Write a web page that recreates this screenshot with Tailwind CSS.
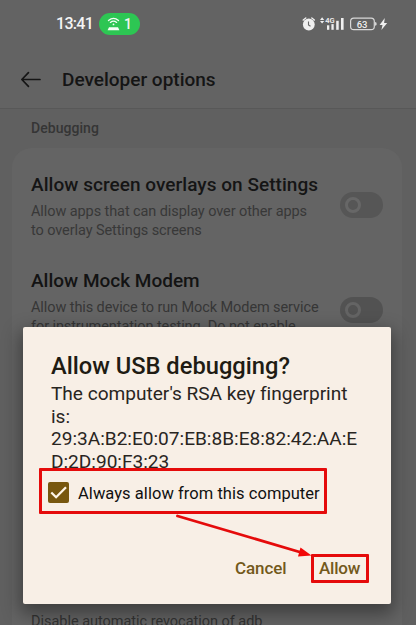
<!DOCTYPE html>
<html lang="en">
<head>
<meta charset="utf-8">
<title>Developer options</title>
<script src="https://cdn.jsdelivr.net/npm/@tailwindcss/browser@4"></script>
</head>
<body class="h-[625px] w-[416px] overflow-hidden bg-[#606060] font-['Roboto',sans-serif]">
<div class="relative flex h-[625px] w-[416px] flex-col overflow-hidden whitespace-nowrap">
  <!-- status bar -->
  <header class="flex h-[47px] shrink-0 items-center bg-[#636363] pr-[28px] pl-[56px] text-[#f4f4f4]">
    <span class="w-[43px] text-[16px] leading-5 font-medium tracking-[-0.7px]">13:41</span>
    <div class="flex h-[22px] w-[41px] items-center rounded-full bg-[#2dc653] pl-[8px]">
      <svg class="h-[14px] w-[13px]" viewBox="0 0 13 14" fill="none" stroke="#f4fff6" stroke-width="1.3" stroke-linecap="round"><path d="M1.5 3.6Q6.5-.9 11.5 3.6M3.4 5.4Q6.5 2.8 9.6 5.4"/><circle cx="6.5" cy="7.4" r=".9" fill="#f4fff6" stroke="none"/><path d="M.6 13.3L2 10.3H11L12.4 13.3Z" fill="#f4fff6" stroke="none"/></svg>
      <span class="ml-[4px] text-[14px] leading-4 font-medium">1</span>
    </div>
    <svg class="ml-auto h-[16px] w-[88px]" viewBox="300 15.7 88 16" fill="#efefef">
      <circle cx="308.8" cy="24.2" r="5.9"/><path d="M303.2 19.7l2.6-2M314.4 19.7l-2.6-2" stroke="#efefef" stroke-width="1.4" stroke-linecap="round"/><path d="M308.5 21.3v3.3l2 1.3" fill="none" stroke="#666" stroke-width="1.1"/>
      <path d="M320 19.6l2.1-2.6 2.1 2.6zM320 20.8h4.2l-2.1 2.4z"/>
      <text x="325.2" y="23" font-size="8" font-weight="600" textLength="9.4" lengthAdjust="spacingAndGlyphs">4G</text>
      <rect x="327" y="25" width="2.3" height="4.5"/><rect x="331.4" y="23.8" width="2.3" height="5.7"/><rect x="336.2" y="20.5" width="2.5" height="9"/><rect x="341" y="17.7" width="2.6" height="11.8"/>
      <rect x="350.6" y="17.8" width="23.7" height="11.6" rx="3.2" fill="none" stroke="#d8d8d8" stroke-width="1.2"/><path d="M375.2 21.8q1.4 0 1.4 1.8t-1.4 1.8z"/>
      <text x="356.7" y="27.3" font-size="9.8" font-weight="500" textLength="10.8" lengthAdjust="spacingAndGlyphs">63</text>
      <path d="M384.8 17.8L379.6 24.6H382.5L381.4 29.8L387.2 22.7H384.1Z"/>
    </svg>
  </header>
  <!-- app bar -->
  <div class="flex h-[62px] shrink-0 items-center border-b border-[#585858] bg-[#636363] pt-[3px] pl-[20px] text-[#151515]">
    <svg class="h-[17px] w-[22px]" viewBox="0 0 22 18" fill="none" stroke="#151515" stroke-width="1.8" stroke-linecap="round" stroke-linejoin="round"><path d="M20.5 9H1.5M8.3 1.8L1.3 9L8.3 16.2"/></svg>
    <h1 class="mt-px ml-[20px] text-[19px] leading-6 font-medium">Developer options</h1>
  </div>
  <main class="flex grow flex-col pr-[14px] pl-[12px]">
    <h2 class="mt-[10px] ml-[19px] text-[14px] leading-[18px] font-medium tracking-[0.05px] text-[#353535]">Debugging</h2>
    <section class="mt-[11px] h-[520px] shrink-0 rounded-t-[20px] bg-[#646464] px-[19px] pt-[25px]">
      <div class="flex h-[96px] items-start justify-between">
        <div>
          <h3 class="text-[19px] leading-6 font-medium tracking-[0.04px] text-[#151515]">Allow screen overlays on Settings</h3>
          <p class="mt-[5px] text-[14.5px] leading-[19px] tracking-[-0.09px] text-[#383838]">Allow apps that can display over other apps<br>to overlay Settings screens</p>
        </div>
        <div class="mt-[19px] flex h-[26px] w-[43px] shrink-0 items-center rounded-full bg-[#565656] pl-[5px]"><i class="size-[16px] rounded-full border-[3px] border-[#676767]"></i></div>
      </div>
      <div class="flex h-[96px] items-start justify-between">
        <div>
          <h3 class="text-[19px] leading-6 font-medium text-[#131313]">Allow Mock Modem</h3>
          <p class="mt-[5px] text-[14.5px] leading-[19px] tracking-[-0.09px] text-[#363636]">Allow this device to run Mock Modem service<br>for instrumentation testing. Do not enable</p>
        </div>
        <div class="mt-[28px] flex h-[26px] w-[43px] shrink-0 items-center rounded-full bg-[#525252] pl-[5px]"><i class="size-[16px] rounded-full border-[3px] border-[#646464]"></i></div>
      </div>
      <p class="mt-[247px] text-[14.5px] leading-[19px] tracking-[-0.03px] text-[#333]">Disable automatic revocation of adb</p>
    </section>
  </main>

  <!-- dialog -->
  <div role="dialog" class="absolute top-[327px] left-[23px] flex h-[277px] w-[368px] flex-col rounded-[2px] bg-[#f8efe6] shadow-[0_7px_18px_3px_rgba(0,0,0,0.38)]">
    <h2 class="mt-[24px] ml-[28px] text-[23.7px] leading-[30px] font-medium text-[#201b13]">Allow USB debugging?</h2>
    <p class="mt-[2px] ml-[28px] text-[19.1px] leading-[22.6px] tracking-[-0.02px] text-[#29251f]">The computer's RSA key fingerprint<br>is:<br>29:3A:B2:E0:07:EB:8B:E8:82:42:AA:E<br>D:2D:90:F3:23</p>
    <label class="mt-[-5px] ml-[16px] flex h-[46px] w-[288px] shrink-0 items-center rounded-[1px] border-[3px] border-[#e50b0b] pt-[3px] pl-[6px] text-[16.5px] tracking-[0.05px] text-[#111]">
      <svg class="size-[21px] shrink-0" viewBox="0 0 21 21"><rect width="21" height="21" rx="2" fill="#78570f"/><path d="M3.3 10.5L8.1 15.2L18 5.2" fill="none" stroke="#fff5e8" stroke-width="2.3"/></svg>
      <span class="mt-[2px] ml-[9px]">Always allow from this computer</span>
    </label>
    <div class="mt-[40px] flex h-[29px] items-center pl-[212px] text-[17px] font-medium text-[#73591b]">
      <span class="w-[76px] tracking-[-0.1px]">Cancel</span>
      <span class="flex h-[29px] w-[58px] items-center rounded-[1px] border-[3px] border-[#e50b0b] pl-[5px] tracking-[-0.2px]">Allow</span>
    </div>
  </div>
  <!-- annotation arrow -->
  <svg class="pointer-events-none absolute top-[510px] left-[170px] h-[50px] w-[150px]" viewBox="170 510 150 50"><path d="M177.5 516L303 553" stroke="#e50b0b" stroke-width="2.8" stroke-linecap="round"/><path d="M311.5 555.5L298 556.5L300.5 547.5Z" fill="#f20808"/></svg>
</div>
</body>
</html>
